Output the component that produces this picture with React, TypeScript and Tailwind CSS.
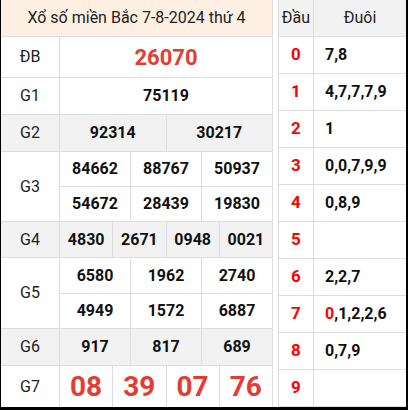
import React from "react";

const RED = "text-[#e63b30]";

function Cell({ children, last, className = "" }: { children: React.ReactNode; last?: boolean; className?: string }) {
  return (
    <div className={`flex-1 flex items-center justify-center ${last ? "" : "border-r border-[#dddddd]"} ${className}`}>
      {children}
    </div>
  );
}

function NumRow({ nums, h, last, big }: { nums: string[]; h: string; last?: boolean; big?: boolean }) {
  return (
    <div className={`flex ${h} ${last ? "" : "border-b border-[#dddddd]"}`}>
      {nums.map((n, i) => (
        <Cell key={i} last={i === nums.length - 1}>
          <span className={big ? `text-[28px] font-bold ${RED}` : "text-[16px] font-bold text-[#111]"}>{n}</span>
        </Cell>
      ))}
    </div>
  );
}

function Prize({
  label,
  rows,
  heights,
  bg,
  last,
  big,
}: {
  label: string;
  rows: string[][];
  heights: string[];
  bg?: boolean;
  last?: boolean;
  big?: boolean;
}) {
  return (
    <div className={`flex ${bg ? "bg-[#f2f2f2]" : "bg-white"} ${last ? "" : "border-b border-[#dddddd]"}`}>
      <div className="w-[59px] shrink-0 border-r border-[#dddddd] flex items-center justify-center text-[16px] text-[#222]">
        {label}
      </div>
      <div className="flex-1 flex flex-col">
        {rows.map((r, i) => (
          <NumRow key={i} nums={r} h={heights[i]} last={i === rows.length - 1} big={big} />
        ))}
      </div>
    </div>
  );
}

const loto: [string, React.ReactNode][] = [
  ["0", "7,8"],
  ["1", "4,7,7,7,9"],
  ["2", "1"],
  ["3", "0,0,7,9,9"],
  ["4", "0,8,9"],
  ["5", ""],
  ["6", "2,2,7"],
  [
    "7",
    <>
      <span className="text-[#ff0000]">0</span>,1,2,2,6
    </>,
  ],
  ["8", "0,7,9"],
  ["9", ""],
];

export default function App() {
  return (
    <div className="w-[408px] h-[410px] bg-white flex border-l border-r-2 border-b-[3px] border-black font-[family-name:Roboto,sans-serif] overflow-hidden">
      {/* left table */}
      <div className="w-[272px] shrink-0 flex flex-col border-r border-[#dddddd]">
        <div className="h-[37px] shrink-0 bg-[#fdf0e3] border-b border-[#dddddd] flex items-center justify-center text-[16px] text-[#222]">
          Xổ số miền Bắc 7-8-2024 thứ 4
        </div>
        <div className="h-[41px] flex border-b border-[#dddddd]">
          <div className="w-[59px] shrink-0 border-r border-[#dddddd] flex items-center justify-center text-[16px] text-[#222]">
            ĐB
          </div>
          <div className="flex-1 flex items-center justify-center">
            <span className={`text-[22px] font-bold ${RED}`}>26070</span>
          </div>
        </div>
        <Prize label="G1" rows={[["75119"]]} heights={["h-[36px]"]} />
        <Prize label="G2" rows={[["92314", "30217"]]} heights={["h-[36px]"]} bg />
        <Prize
          label="G3"
          rows={[
            ["84662", "88767", "50937"],
            ["54672", "28439", "19830"],
          ]}
          heights={["h-[35px]", "h-[34px]"]}
        />
        <Prize label="G4" rows={[["4830", "2671", "0948", "0021"]]} heights={["h-[35px]"]} bg />
        <Prize
          label="G5"
          rows={[
            ["6580", "1962", "2740"],
            ["4949", "1572", "6887"],
          ]}
          heights={["h-[36px]", "h-[34px]"]}
        />
        <Prize label="G6" rows={[["917", "817", "689"]]} heights={["h-[36px]"]} bg />
        <Prize label="G7" rows={[["08", "39", "07", "76"]]} heights={["h-[41px]"]} big last />
      </div>

      <div className="w-[5px] shrink-0" />

      {/* right table */}
      <div className="flex-1 flex flex-col border-l border-[#dddddd]">
        <div className="h-[37px] shrink-0 flex bg-[#f2f2f2] border-b border-[#dddddd] text-[16px] text-[#222]">
          <div className="w-[35px] shrink-0 border-r border-[#dddddd] flex items-center justify-center">Đầu</div>
          <div className="flex-1 flex items-center justify-center">Đuôi</div>
        </div>
        {loto.map(([d, t]) => (
          <div key={d} className="h-[37px] shrink-0 flex border-b border-[#dddddd]">
            <div className="w-[35px] shrink-0 border-r border-[#dddddd] flex items-center justify-center text-[17px] font-bold text-[#ff0000]">
              {d}
            </div>
            <div className="flex-1 flex items-center pl-[11px] text-[16px] font-bold text-[#111]">{t}</div>
          </div>
        ))}
      </div>
    </div>
  );
}
